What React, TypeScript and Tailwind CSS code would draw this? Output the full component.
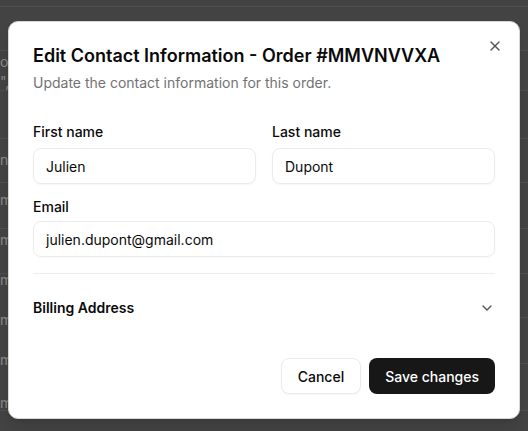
import React from "react";
import { X, ChevronDown } from "lucide-react";

const rows = [6, 50, 90, 138, 182, 228, 273, 317, 363, 410];
const leftTexts = [
  { y: 52, t: "o" },
  { y: 72, t: "\"," },
  { y: 150, t: "n" },
  { y: 190, t: "m" },
  { y: 230, t: "m" },
  { y: 270, t: "m" },
  { y: 310, t: "m" },
  { y: 350, t: "m" },
  { y: 393, t: "m" },
];

export default function App() {
  return (
    <div
      className="relative w-[528px] h-[431px] overflow-hidden bg-[#434343]"
      style={{ fontFamily: "Inter, 'Liberation Sans', sans-serif" }}
    >
      {/* faint page content behind overlay */}
      {rows.map((y) => (
        <div
          key={y}
          className="absolute left-0 right-0 h-px bg-[#4e4e4e]"
          style={{ top: y }}
        />
      ))}
      {leftTexts.map((r, i) => (
        <div
          key={i}
          className="absolute left-0 w-[8px] overflow-hidden text-right text-[14px] leading-5 text-[#8a8a8a]"
          style={{ top: r.y }}
        >
          {r.t}
        </div>
      ))}

      {/* dialog */}
      <div className="absolute inset-0 flex items-start justify-center pt-[21px]">
        <div className="relative w-[512px] rounded-[10px] border border-[#d6d6d6] bg-white p-6 shadow-lg">
          <button className="absolute right-4 top-4 text-[#0a0a0a] opacity-70">
            <X size={16} strokeWidth={2} />
          </button>

          <div className="flex flex-col gap-2 pt-px">
            <h2 className="text-[18px] leading-none font-semibold text-[#0a0a0a]">
              Edit Contact Information - Order #MMVNVVXA
            </h2>
            <p className="text-[14px] leading-5 text-[#737373]">
              Update the contact information for this order.
            </p>
          </div>

          <div className="mt-[32px] grid grid-cols-2 gap-4">
            <div className="flex flex-col gap-[9px]">
              <label className="text-[14px] leading-none font-medium text-[#0a0a0a]">
                First name
              </label>
              <div className="h-9 rounded-lg border border-[#ebebeb] px-3 flex items-center text-[14px] text-[#0a0a0a] shadow-[0_1px_2px_rgba(0,0,0,0.04)]">
                Julien
              </div>
            </div>
            <div className="flex flex-col gap-[9px]">
              <label className="text-[14px] leading-none font-medium text-[#0a0a0a]">
                Last name
              </label>
              <div className="h-9 rounded-lg border border-[#ebebeb] px-3 flex items-center text-[14px] text-[#0a0a0a] shadow-[0_1px_2px_rgba(0,0,0,0.04)]">
                Dupont
              </div>
            </div>
          </div>

          <div className="mt-4 flex flex-col gap-[7px]">
            <label className="text-[14px] leading-none font-medium text-[#0a0a0a]">
              Email
            </label>
            <div className="h-9 rounded-lg border border-[#ebebeb] px-3 flex items-center text-[14px] text-[#0a0a0a] shadow-[0_1px_2px_rgba(0,0,0,0.04)]">
              julien.dupont@gmail.com
            </div>
          </div>

          <div className="mt-4 h-px bg-[#ededed]" />

          <div className="pt-6 flex items-center justify-between">
            <span className="text-[14px] leading-5 font-semibold text-[#0a0a0a]">
              Billing Address
            </span>
            <ChevronDown size={16} className="text-[#525252]" />
          </div>

          <div className="mt-10 flex justify-end gap-2">
            <button className="h-9 px-4 rounded-lg border border-[#ebebeb] bg-white text-[14px] font-medium text-[#0a0a0a] shadow-[0_1px_2px_rgba(0,0,0,0.04)]">
              Cancel
            </button>
            <button className="h-9 px-4 rounded-lg bg-[#171717] text-[14px] font-medium text-white">
              Save changes
            </button>
          </div>
        </div>
      </div>
    </div>
  );
}
